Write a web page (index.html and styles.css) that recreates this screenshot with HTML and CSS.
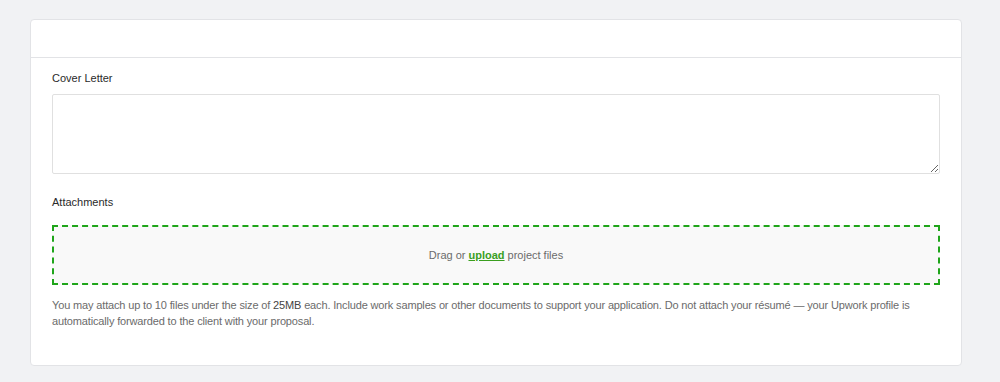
FILE: index.html
```html
<!DOCTYPE html>
<html lang="en">
<head>
  <meta charset="UTF-8" />
  <title>Proposal</title>
  <link rel="stylesheet" href="styles.css">
</head>
<body>
  <div class="card">
    <div class="card-head"></div>
    <div class="card-body">
      <label class="label" for="cover">Cover Letter</label>
      <textarea id="cover" class="cover"></textarea>

      <div class="label label-attach">Attachments</div>
      <div class="dropzone">
        Drag or <a href="#" class="upload">upload</a> project files
      </div>
      <p class="hint">
        You may attach up to 10 files under the size of <span class="size">25MB</span> each. Include work samples or other documents to support your application. Do not attach your résumé — your Upwork profile is automatically forwarded to the client with your proposal.
      </p>
    </div>
  </div>
</body>
</html>
```

FILE: styles.css
```css
body {
  margin: 0;
  padding: 19px 38px 0 30px;
  background: #f1f2f4;
  font-family: 'Liberation Sans', Arial, sans-serif;
  color: #222;
}

.card {
  background: #fff;
  border: 1px solid #e2e3e6;
  border-radius: 4px;
  height: 347px;
  box-sizing: border-box;
}

.card-head {
  height: 37px;
  border-bottom: 1px solid #e2e3e6;
}

.card-body {
  padding: 12px 21px 0 21px;
}

.label {
  display: block;
  font-size: 11px;
  line-height: 16px;
  color: #2a2a2a;
}

.cover {
  display: block;
  box-sizing: border-box;
  width: 100%;
  height: 80px;
  margin-top: 8px;
  border: 1px solid #e0e0e0;
  border-radius: 2px;
  resize: vertical;
  font-family: inherit;
}

.label-attach {
  margin-top: 20px;
}

.dropzone {
  margin-top: 15px;
  height: 60px;
  box-sizing: border-box;
  border: 2px dashed #1fa51a;
  background: #f9f9f9;
  display: flex;
  align-items: center;
  justify-content: center;
  font-size: 11px;
  color: #6b6b6b;
}

.upload {
  color: #3a9f1f;
  font-weight: bold;
  margin: 0 3px;
}

.hint {
  margin: 12px 0 0;
  font-size: 11px;
  line-height: 16px;
  letter-spacing: -0.15px;
  color: #6b6b6b;
}

.size {
  color: #444;
}
```
